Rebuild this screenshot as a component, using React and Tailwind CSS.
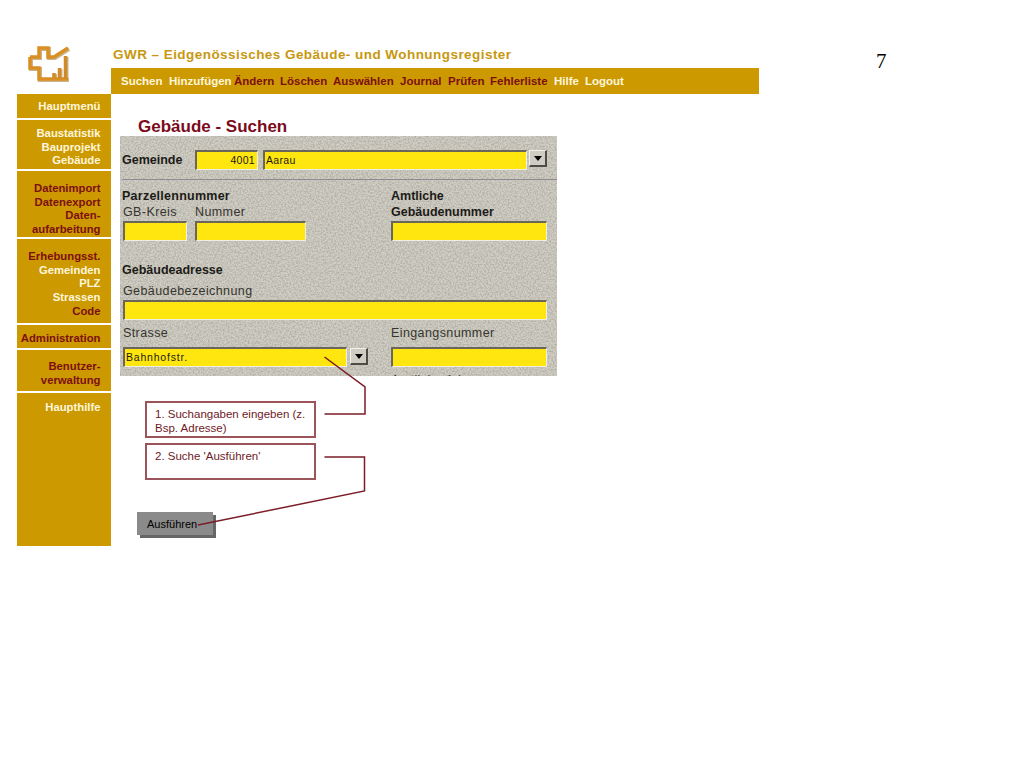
import React from 'react';

const RED = 'text-[#7d0f12]';
const CREAM = 'text-[#fff6dc]';

const navItems = [
  { label: 'Suchen', className: `w-[48px] ${CREAM}` },
  { label: 'Hinzufügen', className: `w-[65px] ${CREAM}` },
  { label: 'Ändern', className: `w-[46px] ${RED}` },
  { label: 'Löschen', className: `w-[53px] ${RED}` },
  { label: 'Auswählen', className: `w-[67px] ${RED}` },
  { label: 'Journal', className: `w-[48px] ${RED}` },
  { label: 'Prüfen', className: `w-[42px] ${RED}` },
  { label: 'Fehlerliste', className: `w-[64px] ${RED}` },
  { label: 'Hilfe', className: `w-[31px] ${CREAM}` },
  { label: 'Logout', className: `w-[40px] ${CREAM}` },
];

// sidebar groups, the white rules between them come from the margins
const sideGroups = [
  { h: 'h-[24px] pt-[6px]', lines: [['Hauptmenü', CREAM]] },
  { h: 'h-[49px] pt-[7px] mt-[2px]', lines: [['Baustatistik', CREAM], ['Bauprojekt', CREAM], ['Gebäude', CREAM]] },
  { h: 'h-[66px] pt-[11px] mt-[2px]', lines: [['Datenimport', RED], ['Datenexport', RED], ['Daten-', RED], ['aufarbeitung', RED]] },
  { h: 'h-[84px] pt-[11px] mt-[2px]', lines: [['Erhebungsst.', RED], ['Gemeinden', CREAM], ['PLZ', CREAM], ['Strassen', CREAM], ['Code', RED]] },
  { h: 'h-[23px] pt-[7px] mt-[2px]', lines: [['Administration', RED]] },
  { h: 'h-[41px] pt-[10px] mt-[2px]', lines: [['Benutzer-', RED], ['verwaltung', RED]] },
  { h: 'flex-1 pt-[8px] mt-[2px]', lines: [['Haupthilfe', CREAM]] },
];

const Logo = () => {
  const outline = 'M3 12 H12 V3 H21 V12 H27 L41 3 M3 12 V23 H12 V34 H41';
  const bars = 'M27 34 V28 M32.5 34 V23 M38.5 34 V11';
  return (
    <svg width="50" height="42" viewBox="0 0 50 42" className="ml-[10px] mt-[1px]">
      <g fill="none">
        <path d={outline} stroke="#c9b48c" strokeWidth="4" transform="translate(1 1)" />
        <path d={bars} stroke="#c9b48c" strokeWidth="4" transform="translate(1 1)" />
        <path d={outline} stroke="#d98f22" strokeWidth="3.5" />
        <path d={bars} stroke="#cf8b28" strokeWidth="3.5" />
      </g>
    </svg>
  );
};

const Field = ({ className = '', children }) => (
  <div
    className={`h-[20px] bg-[#ffe60f] border-t-2 border-l-2 border-r border-b border-t-[#6a675a] border-l-[#6a675a] border-r-[#efeee6] border-b-[#efeee6] text-[10.5px] leading-[17px] tracking-[0.3px] text-[#1c1a10] ${className}`}
  >
    {children}
  </div>
);

const DropButton = () => (
  <div className="w-[18px] h-[17px] bg-[#cfccc3] border-t border-l border-r-2 border-b-2 border-t-[#f0efe9] border-l-[#f0efe9] border-r-[#4e4c45] border-b-[#4e4c45] flex items-center justify-center">
    <div className="w-0 h-0 border-l-[4px] border-r-[4px] border-t-[5px] border-l-transparent border-r-transparent border-t-black" />
  </div>
);

const Label = ({ bold, className = '', children }) => (
  <div
    className={`h-[16px] leading-[16px] whitespace-nowrap ${
      bold
        ? 'text-[12.5px] font-bold text-[#1c1b17]'
        : 'text-[12.5px] tracking-[0.4px] text-[#35342e]'
    } ${className}`}
  >
    {children}
  </div>
);

const FormPanel = () => (
  <div className="relative w-[437px] h-[240px] overflow-hidden bg-[#d0cdc4]">
    {/* scanned-paper grain of the original picture */}
    <svg className="absolute inset-0 pointer-events-none" width="437" height="240">
      <filter id="grain" x="0" y="0" width="100%" height="100%">
        <feTurbulence type="fractalNoise" baseFrequency="0.6" numOctaves="2" seed="7" />
        <feColorMatrix values="0 0 0 0 0.42  0 0 0 0 0.41  0 0 0 0 0.35  3 0 0 0 -1.15" />
      </filter>
      <rect width="437" height="240" filter="url(#grain)" opacity="0.8" />
    </svg>

    <div className="relative">
      {/* Gemeinde */}
      <div className="flex items-start pt-[14px] pl-[2px]">
        <Label bold className="w-[73px] mt-[2px]">Gemeinde</Label>
        <Field className="w-[63px] text-right pr-[2px]">4001</Field>
        <Field className="w-[264px] ml-[5px] pl-[1px]">Aarau</Field>
        <div className="ml-[2px]">
          <DropButton />
        </div>
      </div>
      <div className="h-px ml-[2px] mt-[9px] bg-[#8b8a96]" />

      {/* Parzellennummer / Amtliche Gebäudenummer */}
      <div className="flex mt-[8px] pl-[3px]">
        <div className="w-[268px]">
          <Label bold className="-ml-[1px] tracking-[0.25px]">Parzellennummer</Label>
          <div className="flex">
            <div className="w-[72px]">
              <Label>GB-Kreis</Label>
              <Field className="w-[64px] mt-px" />
            </div>
            <div>
              <Label>Nummer</Label>
              <Field className="w-[111px] mt-px" />
            </div>
          </div>
        </div>
        <div>
          <Label bold>Amtliche</Label>
          <Label bold>Gebäudenummer</Label>
          <Field className="w-[156px] mt-px" />
        </div>
      </div>

      {/* Gebäudeadresse */}
      <div className="mt-[21px] pl-[3px]">
        <Label bold className="-ml-[1px]">Gebäudeadresse</Label>
        <Label className="mt-[5px]">Gebäudebezeichnung</Label>
        <Field className="w-[424px] mt-px" />
      </div>

      {/* Strasse / Eingangsnummer */}
      <div className="flex mt-[5px] pl-[3px]">
        <div className="w-[268px]">
          <Label>Strasse</Label>
          <div className="flex items-start mt-[6px]">
            <Field className="w-[224px] pl-[1px] !tracking-[0.8px]">Bahnhofstr.</Field>
            <div className="ml-[3px] mt-px">
              <DropButton />
            </div>
          </div>
        </div>
        <div>
          <Label>Eingangsnummer</Label>
          <Field className="w-[156px] mt-[6px]" />
          <Label className="mt-[5px]">Amtliche Adresse</Label>
        </div>
      </div>
    </div>
  </div>
);

const Callout = ({ className = '', children }) => (
  <div
    className={`w-[171px] h-[37px] ml-[25px] border-2 border-[#9c545b] pl-[8px] pt-[4px] pr-[4px] text-[11.5px] leading-[14px] text-[#6f1a26] ${className}`}
  >
    {children}
  </div>
);

export default function App() {
  return (
    <div className="relative w-[1024px] h-[768px] overflow-hidden bg-white font-['Liberation_Sans',Arial,sans-serif]">
      {/* Header */}
      <div className="flex pl-[17px] pt-[44px]">
        <div className="w-[94px]">
          <Logo />
        </div>
        <div className="w-[648px]">
          <div className="h-[24px] pl-[2px] pt-[3px] text-[13.5px] leading-[16px] font-bold tracking-[0.45px] text-[#c7980f] whitespace-nowrap">
            GWR – Eidgenössisches Gebäude- und Wohnungsregister
          </div>
          <div className="flex items-center h-[26px] pl-[10px] pt-[1px] bg-[#cc9900] text-[11.5px] font-bold whitespace-nowrap">
            {navItems.map((item) => (
              <span key={item.label} className={item.className}>
                {item.label}
              </span>
            ))}
          </div>
        </div>
        <div className="ml-[117px] mt-[5px] h-[24px] font-['Liberation_Serif',serif] text-[21px] leading-[24px] text-black">
          7
        </div>
      </div>

      {/* Body */}
      <div className="flex">
        <div className="w-[94px] h-[452px] ml-[17px] flex flex-col bg-white">
          {sideGroups.map((group, i) => (
            <div key={i} className={`${group.h} bg-[#cc9900] pr-[10.5px] text-right text-[11.3px] leading-[13.7px] font-bold`}>
              {group.lines.map(([text, color]) => (
                <div key={text} className={color}>
                  {text}
                </div>
              ))}
            </div>
          ))}
        </div>

        <div className="pl-[9px]">
          <h1 className="ml-[18px] mt-[24px] h-[18px] text-[17px] leading-[18px] font-bold text-[#7b0b1c] whitespace-nowrap">
            Gebäude - Suchen
          </h1>
          <FormPanel />

          <Callout className="mt-[25px]">1. Suchangaben eingeben (z. Bsp. Adresse)</Callout>
          <Callout className="mt-[5px]">2. Suche 'Ausführen'</Callout>

          <div className="w-[76px] h-[23px] mt-[32px] ml-[17px] pl-[10px] bg-[#8a8a8a] shadow-[3px_3px_0_#666666] text-[11px] leading-[25px] text-black">
            Ausführen
          </div>
        </div>
      </div>

      {/* Connector lines */}
      <svg className="absolute inset-0 pointer-events-none" width="1024" height="768" fill="none">
        <path d="M324.5 357 L365 387 V414 H324.5" stroke="#7b1c26" strokeWidth="1.5" />
        <path d="M324.5 457 H364.5 V491 L198 525" stroke="#7b1c26" strokeWidth="1.5" />
      </svg>
    </div>
  );
}
